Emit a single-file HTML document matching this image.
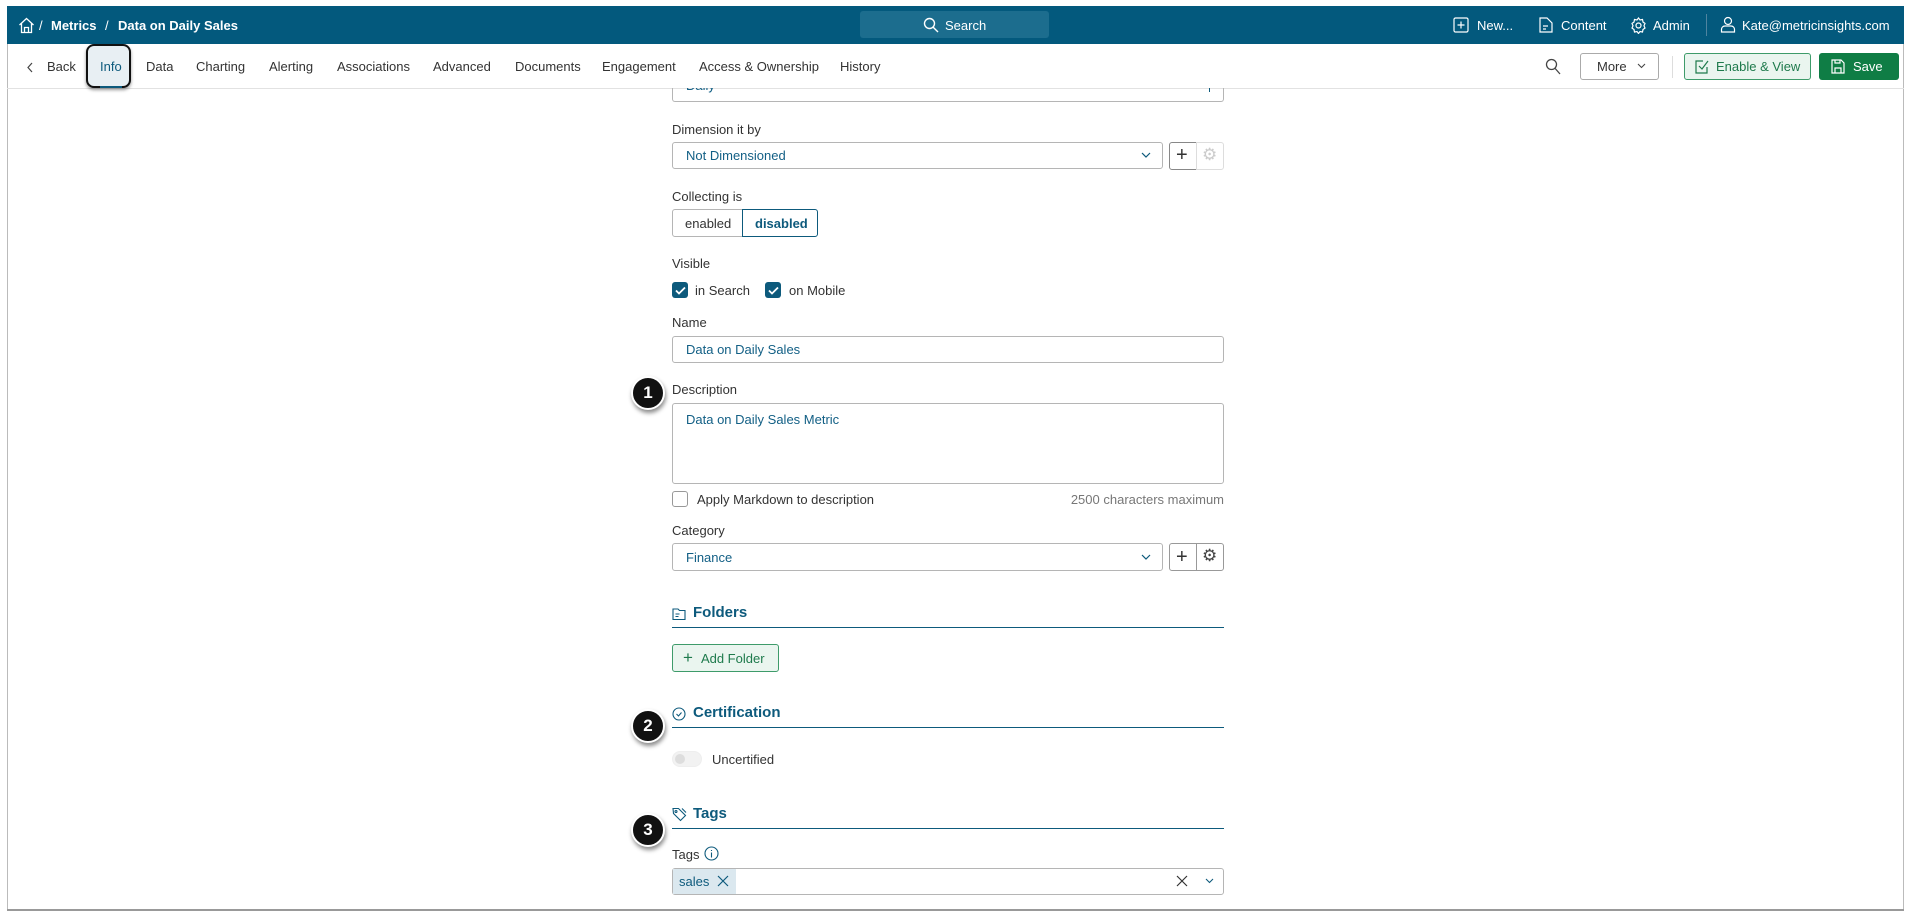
<!DOCTYPE html>
<html><head><meta charset="utf-8"><style>
*{box-sizing:border-box;margin:0;padding:0}
body{width:1908px;height:913px;background:#fff;font-family:"Liberation Sans",sans-serif;font-size:13px;color:#333;position:relative;overflow:hidden}
.a{position:absolute;white-space:nowrap}
.frame{left:7px;top:6px;width:1897px;height:905px;border:1px solid #bbb;border-top:none}
.top{left:7px;top:6px;width:1897px;height:38px;background:#03597d;color:#fff}
.tabs span{position:absolute;top:59px;font-size:13px;color:#333}
.lbl{position:absolute;left:672px;font-size:13px;color:#333;white-space:nowrap}
.inp{position:absolute;left:672px;width:552px;border:1px solid #b5b5b5;border-radius:3px;background:#fff;color:#125f85;font-size:13px;padding-left:13px;display:flex;align-items:center}
.h{position:absolute;left:672px;width:552px;border-bottom:1.5px solid #0d5a7c;color:#0d5a7c;font-weight:bold;font-size:15px;height:20px}
.badge{position:absolute;left:631px;width:34px;height:34px;border-radius:50%;background:#111;color:#fff;font-weight:bold;font-size:17px;text-align:center;line-height:30px;box-shadow:1px 3px 4px rgba(0,0,0,.45);border:2px solid #fff}
.cb{position:absolute;width:16px;height:16px;border-radius:3px;background:#0d5a7c}
.sq{position:absolute;width:28px;height:28px;border:1px solid #b5b5b5;background:#fff}
</style></head><body>
<div class="a frame"></div>
<div class="a top">
  <svg class="a" style="left:11px;top:11px" width="17" height="17" viewBox="0 0 17 17" fill="none" stroke="#fff" stroke-width="1.3"><path d="M1.5 8L8.5 1.5 15.5 8M3.5 6.5V15.5h10V6.5M6.5 15.5v-5h4v5"/></svg>
  <div class="a" style="left:32px;top:12px;font-size:13px">/</div>
  <div class="a" style="left:44px;top:12px;font-size:13px;font-weight:bold">Metrics</div>
  <div class="a" style="left:98px;top:12px;font-size:13px">/</div>
  <div class="a" style="left:111px;top:12px;font-size:13px;font-weight:bold">Data on Daily Sales</div>
  <div class="a" style="left:853px;top:5px;width:189px;height:27px;background:#1c6d8e;border-radius:3px"></div>
  <svg class="a" style="left:916px;top:11px" width="16" height="16" viewBox="0 0 16 16" fill="none" stroke="#fff" stroke-width="1.4"><circle cx="6.5" cy="6.5" r="5"/><path d="M10.2 10.2L15 15"/></svg>
  <div class="a" style="left:938px;top:12px">Search</div>
  <svg class="a" style="left:1446px;top:11px" width="16" height="16" viewBox="0 0 16 16" fill="none" stroke="#fff" stroke-width="1.2"><rect x="1" y="1" width="14" height="14" rx="1.5"/><path d="M8 4.5v7M4.5 8h7"/></svg>
  <div class="a" style="left:1470px;top:12px">New...</div>
  <svg class="a" style="left:1531px;top:10px" width="16" height="18" viewBox="0 0 16 18" fill="none" stroke="#fff" stroke-width="1.2"><path d="M2 2h7l5 5v9H2z M5 10h5M5 13h3"/></svg>
  <div class="a" style="left:1554px;top:12px">Content</div>
  <svg class="a" style="left:1623px;top:11px" width="17" height="17" viewBox="0 0 17 17" fill="none" stroke="#fff" stroke-width="1.2"><circle cx="8.5" cy="8.5" r="2.5"/><path d="M8.5 1l1.5 2 2.5-.5.5 2.5 2 1.5-1 2.3 1 2.3-2 1.4-.5 2.5-2.5-.5-1.5 2-1.5-2-2.5.5-.5-2.5-2-1.4 1-2.3-1-2.3 2-1.5.5-2.5 2.5.5z"/></svg>
  <div class="a" style="left:1646px;top:12px">Admin</div>
  <div class="a" style="left:1699px;top:8px;width:1px;height:22px;background:#4f84a0"></div>
  <svg class="a" style="left:1713px;top:10px" width="16" height="17" viewBox="0 0 16 17" fill="none" stroke="#fff" stroke-width="1.2"><circle cx="8" cy="5" r="3.5"/><path d="M1.5 16v-2.5c0-2 1.5-3.5 3.5-3.5h6c2 0 3.5 1.5 3.5 3.5V16z"/></svg>
  <div class="a" style="left:1735px;top:12px">Kate@metricinsights.com</div>
</div>
<div class="a" style="left:7px;top:88px;width:1897px;height:1px;background:#e2e2e2"></div>
<div class="a" style="left:672px;top:88px;width:552px;height:14px;border:1px solid #b5b5b5;border-top:none;border-radius:0 0 3px 3px;overflow:hidden"><span style="position:absolute;left:13px;top:-10px;color:#125f85">Daily</span></div>
<div class="a" style="left:1209px;top:88px;width:1px;height:4px;background:#0d5a7c"></div>
<div class="tabs">
  <svg class="a" style="left:26px;top:62px" width="8" height="11" viewBox="0 0 8 11" fill="none" stroke="#444" stroke-width="1.2"><path d="M6 1L2 5.5 6 10"/></svg>
  <span style="left:47px">Back</span>
  <div class="a" style="left:86px;top:44px;width:45px;height:44px;border:2.5px solid #111;border-radius:8px;background:#e8eff3;box-shadow:0 2px 3px rgba(0,0,0,.4)"></div>
  <span style="left:100px;color:#0d5a7c">Info</span>
  <div class="a" style="left:100px;top:86px;width:22px;height:2px;background:#0d5a7c"></div>
  <span style="left:146px">Data</span>
  <span style="left:196px">Charting</span>
  <span style="left:269px">Alerting</span>
  <span style="left:337px">Associations</span>
  <span style="left:433px">Advanced</span>
  <span style="left:515px">Documents</span>
  <span style="left:602px">Engagement</span>
  <span style="left:699px">Access &amp; Ownership</span>
  <span style="left:840px">History</span>
</div>
<svg class="a" style="left:1545px;top:58px" width="16" height="17" viewBox="0 0 16 17" fill="none" stroke="#444" stroke-width="1.3"><circle cx="6.5" cy="6.5" r="5"/><path d="M10.2 10.5L15 16"/></svg>
<div class="a" style="left:1580px;top:53px;width:79px;height:27px;border:1px solid #aaa;border-radius:3px"></div>
<div class="a" style="left:1597px;top:59px">More</div>
<svg class="a" style="left:1637px;top:63px" width="9" height="6" viewBox="0 0 9 6" fill="none" stroke="#444" stroke-width="1.1"><path d="M1 1l3.5 3.5L8 1"/></svg>
<div class="a" style="left:1672px;top:56px;width:1px;height:22px;background:#ddd"></div>
<div class="a" style="left:1684px;top:53px;width:127px;height:27px;border:1px solid #3e9b6a;border-radius:3px;background:#eaf5ef"></div>
<svg class="a" style="left:1695px;top:59px" width="14" height="15" viewBox="0 0 14 15" fill="none" stroke="#1e7a4c" stroke-width="1.2"><path d="M12 8v6H1V2h7M4 7l3 3 6-8"/></svg>
<div class="a" style="left:1716px;top:59px;color:#1e7a4c">Enable &amp; View</div>
<div class="a" style="left:1819px;top:53px;width:80px;height:27px;border-radius:3px;background:#0f7d45"></div>
<svg class="a" style="left:1831px;top:59px" width="14" height="15" viewBox="0 0 14 15" fill="none" stroke="#fff" stroke-width="1.2"><path d="M1 1h9l3 3v10H1z M4 14V9h6v5M4 1v3h5V1"/></svg>
<div class="a" style="left:1853px;top:59px;color:#fff">Save</div>

<div class="lbl" style="top:122px">Dimension it by</div>
<div class="inp" style="top:142px;height:27px;width:491px">Not Dimensioned</div>
<svg class="a" style="left:1141px;top:152px" width="10" height="7" viewBox="0 0 10 7" fill="none" stroke="#0d5a7c" stroke-width="1.2"><path d="M1 1l4 4 4-4"/></svg>
<div class="sq" style="left:1169px;top:142px;border-radius:3px 0 0 3px;border-color:#888"></div>
<div class="a" style="left:1176px;top:143px;font-size:20px;line-height:24px;color:#333">+</div>
<div class="sq" style="left:1196px;top:142px;border-radius:0 3px 3px 0;border-color:#ddd"></div>
<div class="a" style="left:1202px;top:145px;font-size:17px;color:#ccc">⚙</div>

<div class="lbl" style="top:189px">Collecting is</div>
<div class="a" style="left:672px;top:209px;width:71px;height:28px;border:1px solid #b5b5b5;border-radius:3px 0 0 3px;padding:6px 0 0 12px">enabled</div>
<div class="a" style="left:742px;top:209px;width:76px;height:28px;border:1px solid #0d5a7c;border-radius:0 3px 3px 0;padding:6px 0 0 12px;color:#0d5a7c;font-weight:bold">disabled</div>

<div class="lbl" style="top:256px">Visible</div>
<div class="cb" style="left:672px;top:282px"></div>
<svg class="a" style="left:675px;top:286px" width="11" height="9" viewBox="0 0 11 9" fill="none" stroke="#fff" stroke-width="1.8"><path d="M1 4.5l3 3 6-6"/></svg>
<div class="lbl" style="left:695px;top:283px">in Search</div>
<div class="cb" style="left:765px;top:282px"></div>
<svg class="a" style="left:768px;top:286px" width="11" height="9" viewBox="0 0 11 9" fill="none" stroke="#fff" stroke-width="1.8"><path d="M1 4.5l3 3 6-6"/></svg>
<div class="lbl" style="left:789px;top:283px">on Mobile</div>

<div class="lbl" style="top:315px">Name</div>
<div class="inp" style="top:336px;height:27px">Data on Daily Sales</div>

<div class="badge" style="top:376px">1</div>
<div class="lbl" style="top:382px">Description</div>
<div class="inp" style="top:403px;height:81px;align-items:flex-start;padding-top:8px">Data on Daily Sales Metric</div>
<div class="a" style="left:672px;top:491px;width:16px;height:16px;border:1px solid #999;border-radius:3px"></div>
<div class="lbl" style="left:697px;top:492px">Apply Markdown to description</div>
<div class="a" style="left:1024px;top:492px;width:200px;text-align:right;color:#777">2500 characters maximum</div>

<div class="lbl" style="top:523px">Category</div>
<div class="inp" style="top:543px;height:28px;width:491px">Finance</div>
<svg class="a" style="left:1141px;top:554px" width="10" height="7" viewBox="0 0 10 7" fill="none" stroke="#0d5a7c" stroke-width="1.2"><path d="M1 1l4 4 4-4"/></svg>
<div class="sq" style="left:1169px;top:543px;border-radius:3px 0 0 3px;border-color:#999"></div>
<div class="a" style="left:1176px;top:545px;font-size:20px;line-height:24px;color:#333">+</div>
<div class="sq" style="left:1196px;top:543px;border-radius:0 3px 3px 0;border-color:#999"></div>
<div class="a" style="left:1202px;top:546px;font-size:17px;color:#444">⚙</div>

<div class="h" style="top:604px;height:24px"><svg style="position:absolute;left:0;top:3px" width="15" height="14" viewBox="0 0 15 14" fill="none" stroke="#0d5a7c" stroke-width="1.1"><path d="M1 2h5l1.5 1.5H13v9H1z M3.5 7h4M3.5 9.5h3"/></svg><span style="position:absolute;left:21px;top:0">Folders</span></div>
<div class="a" style="left:672px;top:644px;width:107px;height:28px;border:1px solid #3e9b6a;border-radius:3px;background:#eaf5ef;color:#1e7a4c;padding:6px 0 0 10px"><span style="font-size:17px;line-height:13px;margin-right:8px">+</span>Add Folder</div>

<div class="badge" style="top:709px">2</div>
<div class="h" style="top:704px;height:24px"><svg style="position:absolute;left:0;top:3px" width="14" height="14" viewBox="0 0 14 14" fill="none" stroke="#0d5a7c" stroke-width="1.1"><circle cx="7" cy="7" r="6"/><path d="M4.5 7l2 2 3-3.5"/></svg><span style="position:absolute;left:21px;top:0">Certification</span></div>
<div class="a" style="left:672px;top:751px;width:30px;height:16px;border-radius:8px;background:#f2f2f2;border:1px solid #eee"></div>
<div class="a" style="left:675px;top:754px;width:10px;height:10px;border-radius:50%;background:#ddd"></div>
<div class="lbl" style="left:712px;top:752px">Uncertified</div>

<div class="badge" style="top:813px">3</div>
<div class="h" style="top:805px;height:24px"><svg style="position:absolute;left:0;top:2px" width="15" height="15" viewBox="0 0 15 15" fill="none" stroke="#0d5a7c" stroke-width="1.1"><path d="M1 1.5h5.5l7 7-5 5-7-7z M10 1.5l4 4"/><circle cx="4" cy="4.5" r="1"/></svg><span style="position:absolute;left:21px;top:0">Tags</span></div>
<div class="lbl" style="top:847px">Tags</div>
<svg class="a" style="left:704px;top:846px" width="15" height="15" viewBox="0 0 15 15" fill="none" stroke="#0d5a7c" stroke-width="1.1"><circle cx="7.5" cy="7.5" r="6.5"/><path d="M7.5 6.5v5M7.5 4v1"/></svg>
<div class="a" style="left:672px;top:868px;width:552px;height:27px;border:1px solid #b5b5b5;border-radius:3px"></div>
<div class="a" style="left:673px;top:869px;width:63px;height:25px;background:#dbe8ef;color:#0d5a7c;padding:5px 0 0 6px">sales</div>
<svg class="a" style="left:717px;top:875px" width="12" height="12" viewBox="0 0 12 12" stroke="#0d5a7c" stroke-width="1.2"><path d="M1 1l10 10M11 1L1 11"/></svg>
<svg class="a" style="left:1176px;top:875px" width="12" height="12" viewBox="0 0 12 12" stroke="#333" stroke-width="1.2"><path d="M1 1l10 10M11 1L1 11"/></svg>
<svg class="a" style="left:1205px;top:878px" width="9" height="6" viewBox="0 0 9 6" fill="none" stroke="#0d5a7c" stroke-width="1.1"><path d="M1 1l3.5 3.5L8 1"/></svg>
<div class="a" style="left:7px;top:909px;width:1897px;height:2px;background:#999"></div>
</body></html>
